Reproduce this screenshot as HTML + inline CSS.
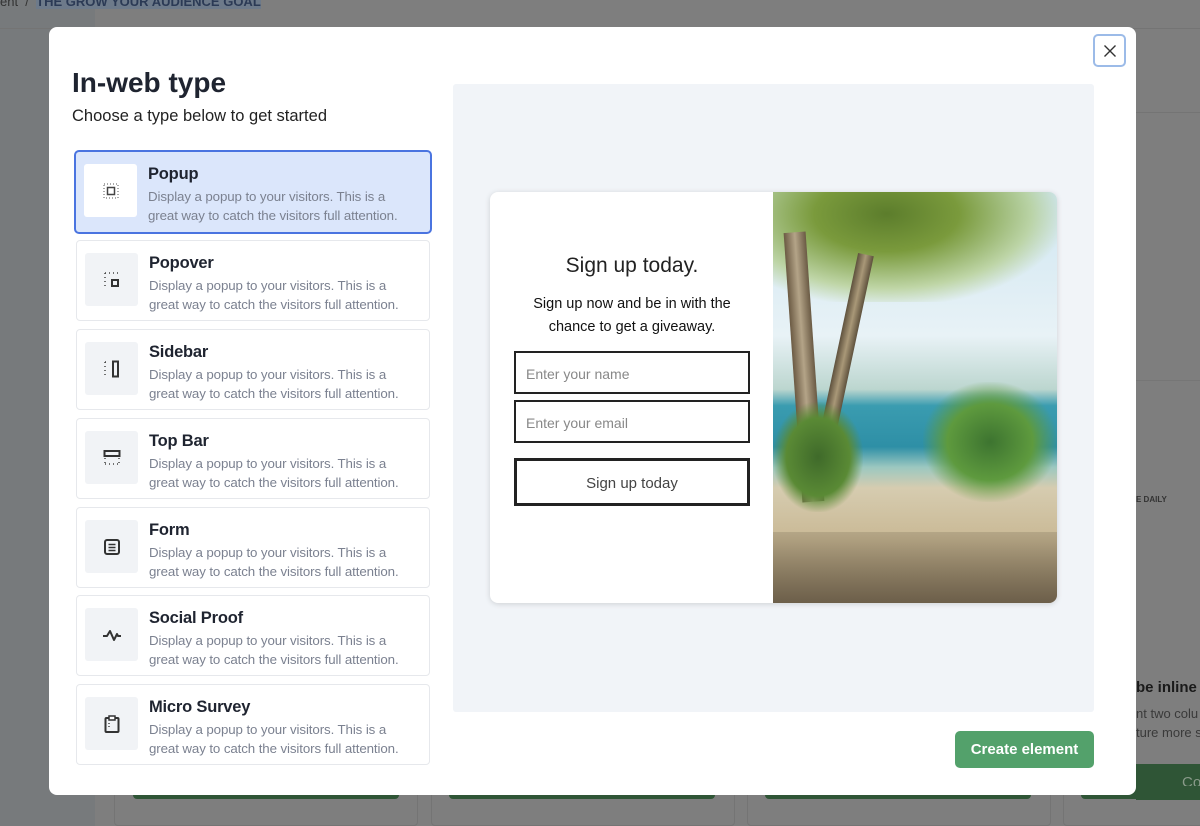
<!DOCTYPE html>
<html style="background:#7d7d7d"><head><style>
*{box-sizing:border-box;margin:0;padding:0}
html,body{background:#7d7d7d}
body{width:1200px;height:826px;overflow:hidden;font-family:"Liberation Sans",sans-serif;position:relative}
.abs{position:absolute}
.modal{left:49px;top:27px;width:1087px;height:768px;background:#fff;border-radius:8px}
h1{position:absolute;left:72px;top:67px;font-size:28px;font-weight:bold;color:#1f2430}
.sub{left:72px;top:107px;font-size:16.5px;color:#222}
.item{position:absolute;left:76px;width:354px;height:81px;border:1px solid #e6e8ec;border-radius:4px;background:#fff}
.item.sel{left:74px;width:358px;height:84px;border:2px solid #4a74e0;background:#dbe6fb;border-radius:5px}
.ic{position:absolute;left:8px;top:12px;width:53px;height:53px;background:#f1f3f6;border-radius:3px;display:flex;align-items:center;justify-content:center}
.sel .ic{background:#fff}
.t{position:absolute;left:72px;top:13px;font-size:16.5px;color:#1f2430;font-weight:bold;letter-spacing:-0.2px}
.d{position:absolute;left:72px;top:35px;font-size:13.3px;line-height:19px;color:#7b8190;width:262px;letter-spacing:-0.1px}
.prev{left:453px;top:84px;width:641px;height:628px;background:#f1f4f8;border-radius:3px}
.card{left:490px;top:192px;width:567px;height:411px;background:#fff;border-radius:8px;box-shadow:0 1px 6px rgba(0,0,0,.15);overflow:hidden}
.inp{position:absolute;left:24px;width:236px;height:43px;border:2px solid #222;font-size:14px;color:#888;padding:13px 10px}
</style></head><body>
<div class="abs" style="left:0;top:0;width:1200px;height:826px;background:#7e7e7e"></div>
<div class="abs" style="left:0;top:0;width:95px;height:826px;background:#777a7c"></div>
<div class="abs" style="left:0;top:-6px;font-size:13px;color:#333">ent &nbsp;/ &nbsp;<span style="background:#6d7a8a;color:#2b3a55;font-weight:bold">THE GROW YOUR AUDIENCE GOAL</span></div>
<div class="abs" style="left:0;top:28px;width:1200px;height:1px;background:#747474"></div>
<div class="abs" style="left:1136px;top:112px;width:64px;height:1px;background:#747474"></div>
<div class="abs" style="left:1136px;top:380px;width:64px;height:1px;background:#767676"></div>
<div class="abs" style="left:1136px;top:495px;font-size:8px;font-weight:bold;color:#333">E DAILY</div>
<div class="abs" style="left:1136px;top:679px;font-size:15px;font-weight:bold;color:#1a1a1a">be inline</div>
<div class="abs" style="left:1136px;top:704px;font-size:13px;color:#3a3a3a;line-height:19px;white-space:nowrap">nt two colu<br>ture more s</div>
<div class="abs" style="left:1136px;top:764px;width:64px;height:36px;background:#2f5536;color:#8a9a8a;font-size:15px;padding:10px 0 0 46px">Co</div>
<div class="abs" style="left:114px;top:786px;width:304px;height:40px;border:1px solid #747474;border-radius:4px"></div>
<div class="abs" style="left:133px;top:786px;width:266px;height:13px;background:#2f5536;border-radius:4px"></div>
<div class="abs" style="left:431px;top:786px;width:304px;height:40px;border:1px solid #747474;border-radius:4px"></div>
<div class="abs" style="left:449px;top:786px;width:266px;height:13px;background:#2f5536;border-radius:4px"></div>
<div class="abs" style="left:747px;top:786px;width:304px;height:40px;border:1px solid #747474;border-radius:4px"></div>
<div class="abs" style="left:765px;top:786px;width:266px;height:13px;background:#2f5536;border-radius:4px"></div>
<div class="abs" style="left:1063px;top:786px;width:140px;height:40px;border:1px solid #747474;border-radius:4px"></div>
<div class="abs" style="left:1081px;top:786px;width:130px;height:13px;background:#2f5536;border-radius:4px"></div>

<div class="abs modal"></div>
<div class="abs" style="left:1093px;top:34px;width:33px;height:33px;border:2px solid #9cbbe8;border-radius:5px;display:flex;align-items:center;justify-content:center"><svg width="14" height="14" viewBox="0 0 14 14"><path d="M1.5 1.5l11 11M12.5 1.5l-11 11" stroke="#333" stroke-width="1.4"/></svg></div>
<h1>In-web type</h1>
<div class="abs sub">Choose a type below to get started</div>

<div class="item sel" style="top:150px"><div class="ic"><svg width="20" height="20" viewBox="0 0 20 20"><rect x="3" y="3" width="14" height="14" fill="none" stroke="#555" stroke-dasharray="1 2"/><rect x="6.5" y="6.5" width="7" height="7" fill="none" stroke="#444" stroke-width="1.5"/></svg></div><div class="t">Popup</div><div class="d">Display a popup to your visitors. This is a great way to catch the visitors full attention.</div></div>
<div class="item" style="top:240px"><div class="ic"><svg width="20" height="20" viewBox="0 0 20 20"><path d="M3 3h14M3 3v14" fill="none" stroke="#444" stroke-dasharray="1 3" stroke-width="1.5"/><rect x="10" y="10" width="6" height="6" fill="none" stroke="#333" stroke-width="2"/></svg></div><div class="t">Popover</div><div class="d">Display a popup to your visitors. This is a great way to catch the visitors full attention.</div></div>
<div class="item" style="top:329px"><div class="ic"><svg width="20" height="20" viewBox="0 0 20 20"><path d="M3 3h4M3 3v14" fill="none" stroke="#444" stroke-dasharray="1 3" stroke-width="1.5"/><rect x="11" y="2.5" width="5" height="15" fill="none" stroke="#333" stroke-width="2"/></svg></div><div class="t">Sidebar</div><div class="d">Display a popup to your visitors. This is a great way to catch the visitors full attention.</div></div>
<div class="item" style="top:418px"><div class="ic"><svg width="20" height="20" viewBox="0 0 20 20"><rect x="2.5" y="3" width="15" height="5" fill="none" stroke="#333" stroke-width="2"/><path d="M3 16h14M3 10v6M17 10v6" fill="none" stroke="#444" stroke-dasharray="1 3" stroke-width="1.5"/></svg></div><div class="t">Top Bar</div><div class="d">Display a popup to your visitors. This is a great way to catch the visitors full attention.</div></div>
<div class="item" style="top:507px"><div class="ic"><svg width="20" height="20" viewBox="0 0 20 20"><rect x="3" y="3" width="14" height="14" rx="2" fill="none" stroke="#333" stroke-width="2"/><path d="M6.5 7.5h7M6.5 10.5h7M6.5 13.5h7" stroke="#333" stroke-width="1.5"/></svg></div><div class="t">Form</div><div class="d">Display a popup to your visitors. This is a great way to catch the visitors full attention.</div></div>
<div class="item" style="top:595px"><div class="ic"><svg width="22" height="20" viewBox="0 0 22 20"><path d="M2 11h4l3-5 4 9 3-6 1 2h3" fill="none" stroke="#333" stroke-width="2" stroke-linejoin="round"/></svg></div><div class="t">Social Proof</div><div class="d">Display a popup to your visitors. This is a great way to catch the visitors full attention.</div></div>
<div class="item" style="top:684px"><div class="ic"><svg width="20" height="20" viewBox="0 0 20 20"><rect x="3.5" y="4" width="13" height="14" rx="1" fill="none" stroke="#333" stroke-width="2"/><rect x="7" y="2" width="6" height="4" fill="#fff" stroke="#333" stroke-width="1.5"/><path d="M7 9v6" stroke="#444" stroke-dasharray="1 2" stroke-width="1.5"/></svg></div><div class="t">Micro Survey</div><div class="d">Display a popup to your visitors. This is a great way to catch the visitors full attention.</div></div>

<div class="abs prev"></div>
<div class="abs card">
 <div class="abs" style="left:0;top:62px;width:284px;text-align:center;font-size:21px;color:#222">Sign up today.</div>
 <div class="abs" style="left:0;top:101px;width:284px;text-align:center;font-size:14.5px;line-height:23px;color:#111">Sign up now and be in with the<br>chance to get a giveaway.</div>
 <div class="inp" style="top:159px">Enter your name</div>
 <div class="inp" style="top:208px">Enter your email</div>
 <div class="inp" style="top:266px;height:48px;border-width:3px;text-align:center;font-size:15px;color:#444;padding-top:14px">Sign up today</div>
 <div class="abs" style="left:283px;top:0;width:284px;height:411px;background:linear-gradient(180deg,#cfe6f2 0%,#e8f2f6 35%,#bcd6cf 48%,#3a9cb0 52%,#2e8fa6 62%,#9cc8c0 67%,#d6ccb0 72%,#c9b894 85%,#9d8c6c 100%)">
  <div class="abs" style="left:0;top:0;width:284px;height:110px;background:radial-gradient(ellipse at 40% 20%,#5c7d2c 0%,#7a9a3c 30%,rgba(160,190,90,.5) 60%,transparent 75%)"></div>
  <div class="abs" style="left:20px;top:40px;width:22px;height:270px;background:linear-gradient(90deg,#6b5a43,#b4a488,#6a5a44);transform:rotate(-4deg)"></div>
  <div class="abs" style="left:60px;top:60px;width:16px;height:240px;background:linear-gradient(90deg,#5e513d,#a99878,#5e513d);transform:rotate(12deg)"></div>
  <div class="abs" style="left:0;top:210px;width:90px;height:110px;background:radial-gradient(ellipse,#3f6a2a 0%,#5a8a35 50%,transparent 72%)"></div>
  <div class="abs" style="left:150px;top:190px;width:134px;height:120px;background:radial-gradient(ellipse,#3d7430 0%,#5e9a3e 45%,transparent 72%)"></div>
  <div class="abs" style="left:0;top:340px;width:284px;height:71px;background:linear-gradient(180deg,rgba(90,80,60,.2),rgba(60,50,40,.5))"></div>
 </div>
</div>
<div class="abs" style="left:955px;top:731px;width:139px;height:37px;background:#53a16b;border-radius:5px;color:#fff;font-size:15px;font-weight:bold;text-align:center;line-height:37px">Create element</div>
</body></html>
